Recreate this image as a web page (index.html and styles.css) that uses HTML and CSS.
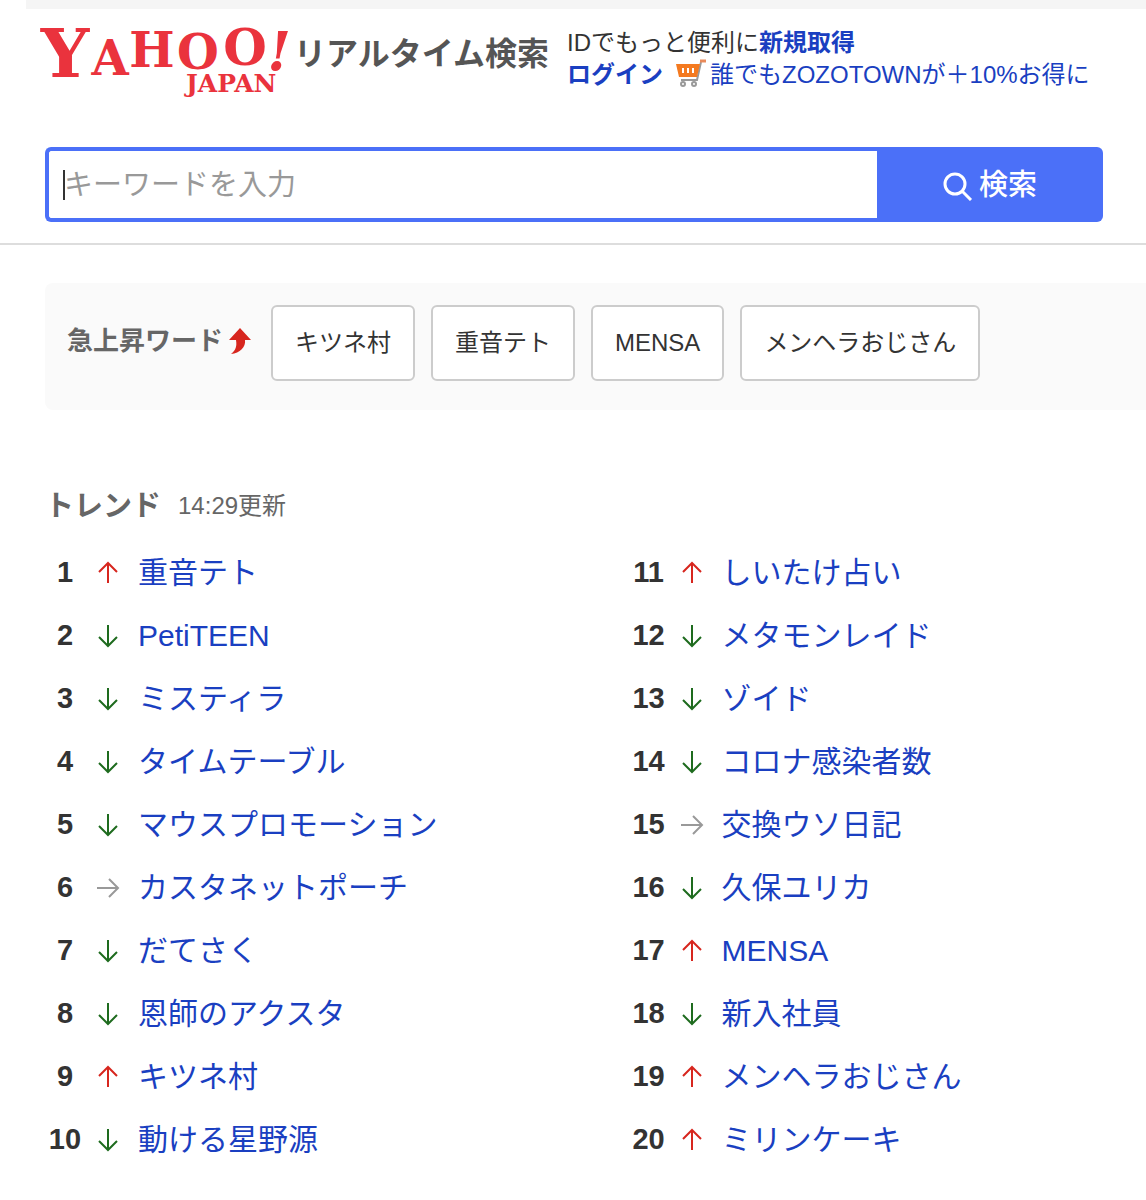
FILE: index.html
```html
<!DOCTYPE html>
<html lang="ja">
<head>
    <meta charset="UTF-8">
    <meta name="viewport" content="width=device-width, initial-scale=1.0">
    <title>Yahoo!リアルタイム検索</title>
    <link rel="stylesheet" href="styles.css">
</head>
<body>
    <!-- shared arrow icons -->
    <svg class="sprite" aria-hidden="true">
        <symbol id="up" viewBox="0 0 24 24">
            <path d="M12 22V2M3 11l9-9 9 9"/>
        </symbol>
        <symbol id="down" viewBox="0 0 24 24">
            <path d="M12 1v21M3 13l9 9 9-9"/>
        </symbol>
        <symbol id="stay" viewBox="0 0 24 24">
            <path d="M1 12h21M13 3l9 9-9 9"/>
        </symbol>
    </svg>

    <div class="top-bar"></div>

    <header class="header">
        <div class="brand">
            <svg class="logo" viewBox="0 0 256 68" width="256" height="68" role="img" aria-label="Yahoo! JAPAN">
                <text class="logo-yahoo"><tspan x="30" y="50" font-size="68">Y</tspan><tspan x="75" y="48" font-size="48">A</tspan><tspan x="117" y="40" font-size="48">H</tspan><tspan x="163" y="42" font-size="48">O</tspan><tspan x="210" y="38" font-size="50">O</tspan><tspan class="bang" x="244" y="44" font-size="54">!</tspan></text>
                <text class="logo-japan" x="151" y="65" font-size="25">JAPAN</text>
            </svg>
            <h1>リアルタイム検索</h1>
        </div>
        <div class="account">
            <p>IDでもっと便利に<a href="#" class="strong">新規取得</a></p>
            <p class="promo">
                <a href="#" class="strong">ログイン</a>
                <svg class="cart" viewBox="0 0 32 28" width="32" height="28" aria-hidden="true">
                    <path d="M26 3l-4 18H6" fill="none" stroke="#999" stroke-width="2"/>
                    <path d="M1 5h24l-3 13H4z" fill="#f47a20"/>
                    <path d="M8 9v5M13 9v5M18 9v5" stroke="#fff" stroke-width="2"/>
                    <path d="M25 2h6" stroke="#e98a5a" stroke-width="3"/>
                    <circle cx="8" cy="25" r="2" fill="#fff" stroke="#999" stroke-width="2"/>
                    <circle cx="19" cy="25" r="2" fill="#fff" stroke="#999" stroke-width="2"/>
                </svg>
                <a href="#">誰でもZOZOTOWNが＋10%お得に</a>
            </p>
        </div>
    </header>

    <form class="search">
        <div class="search-field">
            <input type="text" name="p" placeholder="キーワードを入力" aria-label="キーワードを入力">
            <span class="caret"></span>
        </div>
        <button type="submit">
            <svg viewBox="0 0 30 30" width="30" height="30" aria-hidden="true">
                <circle cx="12" cy="13" r="10"/>
                <path d="M19 20l9 9"/>
            </svg>
            検索
        </button>
    </form>

    <main>
        <section class="rising">
            <h2>急上昇ワード
                <svg viewBox="0 0 22 26" width="22" height="26" aria-hidden="true">
                    <path d="M11 0L22 12h-6c1 7-5 13-14 14 5-4 6-8 5-14H0z" fill="#d7261e"/>
                </svg>
            </h2>
            <a href="#" class="chip">キツネ村</a>
            <a href="#" class="chip">重音テト</a>
            <a href="#" class="chip">MENSA</a>
            <a href="#" class="chip">メンヘラおじさん</a>
        </section>

        <section class="trend">
            <div class="trend-head">
                <h2>トレンド</h2>
                <span>14:29更新</span>
            </div>
            <div class="columns">
                <ol>
                    <li><b>1</b><svg class="up"><use href="#up"/></svg><a href="#">重音テト</a></li>
                    <li><b>2</b><svg class="down"><use href="#down"/></svg><a href="#">PetiTEEN</a></li>
                    <li><b>3</b><svg class="down"><use href="#down"/></svg><a href="#">ミスティラ</a></li>
                    <li><b>4</b><svg class="down"><use href="#down"/></svg><a href="#">タイムテーブル</a></li>
                    <li><b>5</b><svg class="down"><use href="#down"/></svg><a href="#">マウスプロモーション</a></li>
                    <li><b>6</b><svg class="stay"><use href="#stay"/></svg><a href="#">カスタネットポーチ</a></li>
                    <li><b>7</b><svg class="down"><use href="#down"/></svg><a href="#">だてさく</a></li>
                    <li><b>8</b><svg class="down"><use href="#down"/></svg><a href="#">恩師のアクスタ</a></li>
                    <li><b>9</b><svg class="up"><use href="#up"/></svg><a href="#">キツネ村</a></li>
                    <li><b>10</b><svg class="down"><use href="#down"/></svg><a href="#">動ける星野源</a></li>
                </ol>
                <ol start="11">
                    <li><b>11</b><svg class="up"><use href="#up"/></svg><a href="#">しいたけ占い</a></li>
                    <li><b>12</b><svg class="down"><use href="#down"/></svg><a href="#">メタモンレイド</a></li>
                    <li><b>13</b><svg class="down"><use href="#down"/></svg><a href="#">ゾイド</a></li>
                    <li><b>14</b><svg class="down"><use href="#down"/></svg><a href="#">コロナ感染者数</a></li>
                    <li><b>15</b><svg class="stay"><use href="#stay"/></svg><a href="#">交換ウソ日記</a></li>
                    <li><b>16</b><svg class="down"><use href="#down"/></svg><a href="#">久保ユリカ</a></li>
                    <li><b>17</b><svg class="up"><use href="#up"/></svg><a href="#">MENSA</a></li>
                    <li><b>18</b><svg class="down"><use href="#down"/></svg><a href="#">新入社員</a></li>
                    <li><b>19</b><svg class="up"><use href="#up"/></svg><a href="#">メンヘラおじさん</a></li>
                    <li><b>20</b><svg class="up"><use href="#up"/></svg><a href="#">ミリンケーキ</a></li>
                </ol>
            </div>
        </section>
    </main>
</body>
</html>
```
FILE: styles.css
```css
* {
    box-sizing: border-box;
}

body {
    margin: 0;
    background: #fff;
    color: #333;
    font-family: "Liberation Sans", "Noto Sans CJK JP", sans-serif;
    font-size: 24px;
}

h1, h2, p, ol {
    margin: 0;
    padding: 0;
}

a {
    color: #1a3fc1;
    text-decoration: none;
}

a:hover {
    text-decoration: underline;
}

.sprite {
    display: none;
}

.top-bar {
    height: 9px;
    margin-left: 26px;
    background: #f5f5f5;
}

/* header */
.header {
    display: flex;
    align-items: flex-start;
    padding: 18px 35px 0;
    height: 138px;
}

.brand {
    display: flex;
    align-items: flex-start;
    width: 532px;
}

.logo {
    flex: none;
    margin-right: 3px;
    overflow: visible;
    fill: #ea333d;
    font-family: "DejaVu Serif", serif;
    font-weight: bold;
}

.logo-yahoo {
    text-anchor: middle;
}

.bang {
    font-style: italic;
}

.brand h1 {
    color: #555;
    font-size: 32px;
    line-height: 54px;
    white-space: nowrap;
}

.account {
    line-height: 32px;
    white-space: nowrap;
}

.strong {
    font-weight: bold;
}

.promo {
    display: flex;
}

.cart {
    margin: 0 3px 0 12px;
}

/* search box */
.search {
    display: flex;
    padding: 0 43px 21px 45px;
    border-bottom: 2px solid #ddd;
}

.search-field {
    position: relative;
    flex: 1;
}

.search input {
    width: 100%;
    height: 75px;
    padding: 2px 15px 0;
    border: 4px solid #4b70f8;
    border-right: none;
    border-radius: 6px 0 0 6px;
    outline: none;
    color: #333;
    font: inherit;
    font-size: 29px;
}

.search input::placeholder {
    color: #999;
}

.caret {
    position: absolute;
    top: 23px;
    left: 18px;
    width: 2px;
    height: 30px;
    background: #333;
}

.search button {
    display: flex;
    align-items: center;
    justify-content: center;
    gap: 6px;
    width: 226px;
    height: 75px;
    padding: 2px 0 0;
    border: none;
    border-radius: 0 6px 6px 0;
    background: #4b70f8;
    color: #fff;
    font: inherit;
    font-size: 29px;
    font-weight: 500;
    line-height: 73px;
    cursor: pointer;
}

.search button svg {
    fill: none;
    stroke: #fff;
    stroke-width: 3;
}

/* rising words */
.rising {
    display: flex;
    gap: 16px;
    margin: 38px 0 0 45px;
    padding: 22px 22px 29px;
    border-radius: 8px 0 0 8px;
    background: #fafafa;
}

.rising h2 {
    display: flex;
    align-items: center;
    gap: 6px;
    margin-right: 4px;
    color: #666;
    font-size: 26px;
    line-height: 72px;
    height: 72px;
    white-space: nowrap;
}

.chip {
    padding: 0 22px;
    border: 2px solid #ccc;
    border-radius: 6px;
    background: #fff;
    color: #333;
    line-height: 72px;
    white-space: nowrap;
}

/* trend ranking */
.trend {
    padding: 74px 0 24px 45px;
}

.trend-head {
    display: flex;
    gap: 17px;
    margin-bottom: 13px;
    color: #666;
    line-height: 44px;
}

.trend-head h2 {
    font-size: 29px;
}

.columns {
    display: grid;
    grid-template-columns: 53% 1fr;
}

.columns ol {
    list-style: none;
}

.columns li {
    display: flex;
    align-items: center;
    font-size: 29px;
    line-height: 63px;
    white-space: nowrap;
}

.columns b {
    width: 40px;
    text-align: center;
}

.columns a {
    font-size: 30px;
}

.columns li svg {
    width: 24px;
    height: 24px;
    margin: 0 18px 0 11px;
    fill: none;
    stroke-width: 2;
}

.up {
    stroke: #d7261e;
}

.down {
    stroke: #1e6b1e;
}

.stay {
    stroke: #999;
}
```
